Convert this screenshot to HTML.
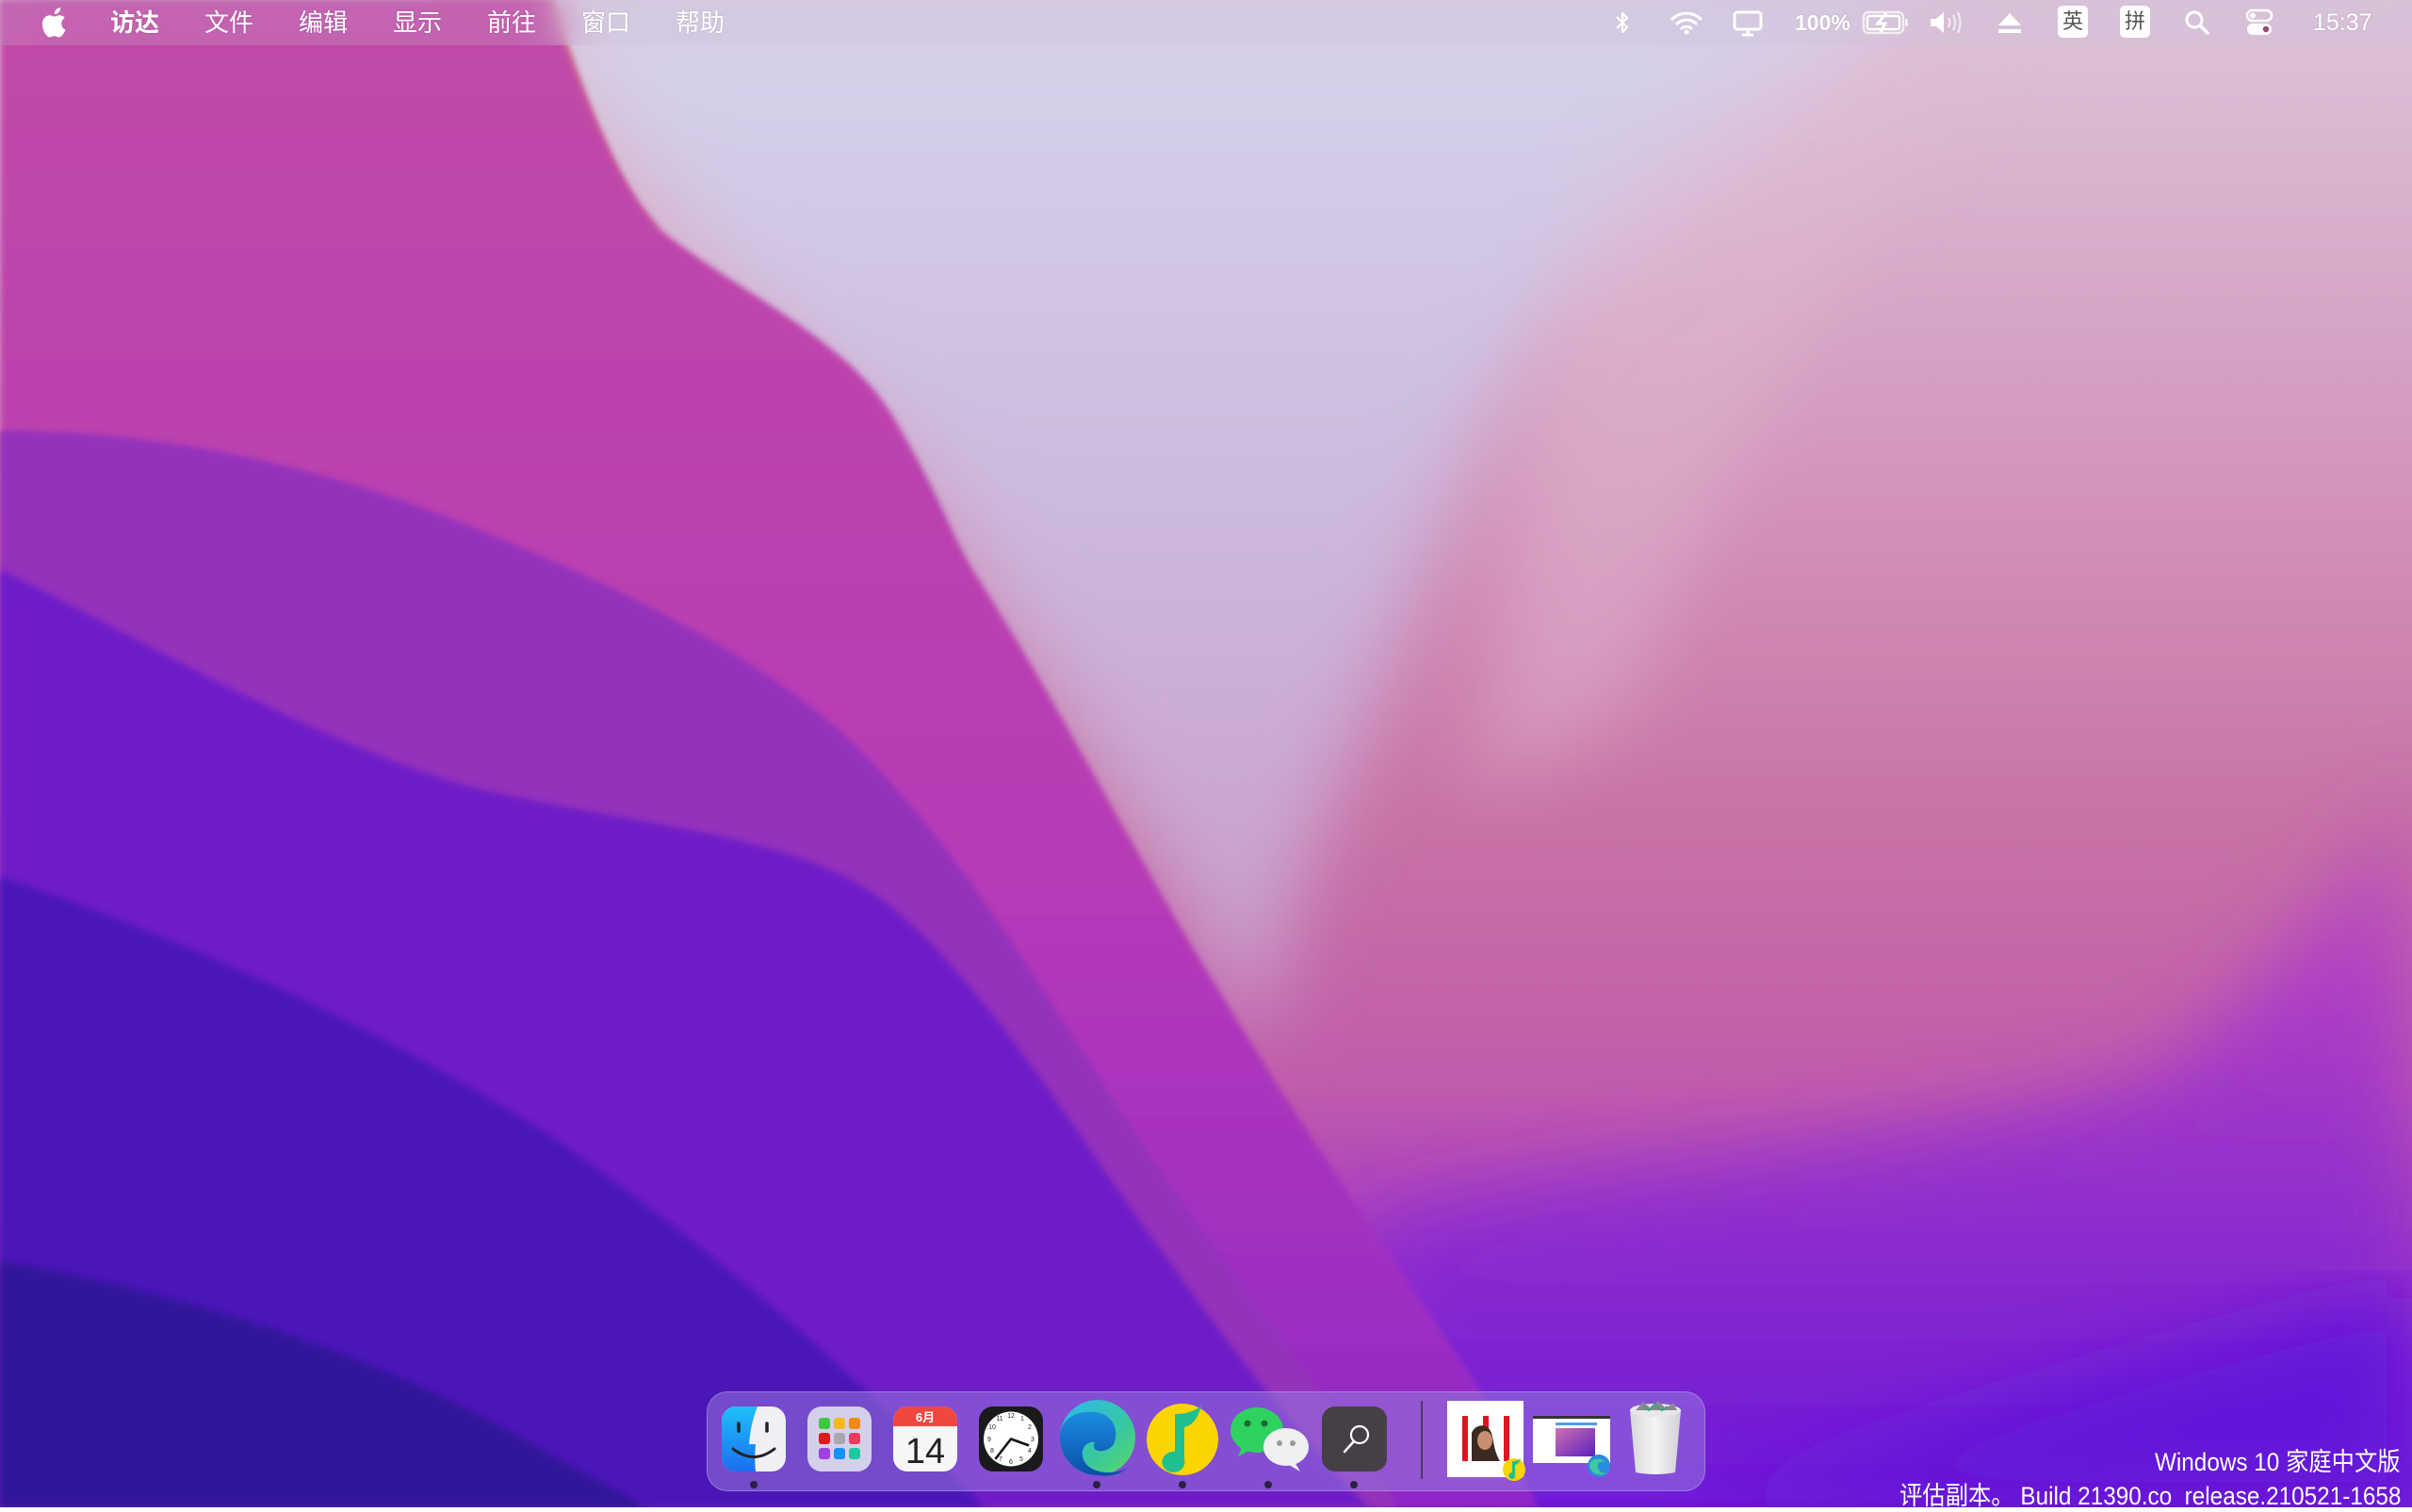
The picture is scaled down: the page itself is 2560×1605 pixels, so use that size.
<!DOCTYPE html>
<html><head><meta charset="utf-8">
<style>
html,body{margin:0;padding:0;width:2560px;height:1600px;overflow:hidden;font-family:"Liberation Sans","Noto Sans CJK SC",sans-serif;}
#bg{position:absolute;left:0;top:0;width:2560px;height:1600px}
.menubar{position:absolute;left:0;top:0;width:2560px;height:48px;background:rgba(200,190,215,0.22);backdrop-filter:blur(20px);color:#fff;}
.mi{position:absolute;top:7px;font-size:26px;line-height:34px;color:#fff;text-shadow:0 0 2px rgba(0,0,0,0.15)}
.ab{position:absolute}
.dock{position:absolute;left:750px;top:1477px;width:1060px;height:106px;border-radius:22px;background:rgba(150,120,220,0.55);border:1px solid rgba(255,255,255,0.25);box-sizing:border-box}
.dot{position:absolute;top:1572px;width:8px;height:8px;border-radius:50%;background:#2a2040}
.wm{position:absolute;right:12px;color:#fff;font-size:27px;text-align:right;white-space:nowrap;transform:scaleX(0.9);transform-origin:right center}
</style></head><body>
<svg id="bg" viewBox="0 0 1568 980" preserveAspectRatio="none">
<defs>
<linearGradient id="base" x1="0" y1="0" x2="0" y2="1">
<stop offset="0" stop-color="#dcc4da"/><stop offset="0.3" stop-color="#d498bc"/><stop offset="0.55" stop-color="#c872a4"/><stop offset="0.72" stop-color="#c05cac"/><stop offset="0.85" stop-color="#a034c8"/><stop offset="1" stop-color="#7018d8"/></linearGradient>
<linearGradient id="sky" x1="0" y1="0" x2="0" y2="1">
<stop offset="0" stop-color="#d6d4ea"/><stop offset="0.5" stop-color="#ccb8dc"/><stop offset="1" stop-color="#c898c8"/></linearGradient>
<linearGradient id="mag" x1="0" y1="0" x2="0" y2="1">
<stop offset="0" stop-color="#c24aa6"/><stop offset="0.6" stop-color="#b63ab8"/><stop offset="1" stop-color="#9028c8"/></linearGradient>
<linearGradient id="rb" x1="0" y1="0" x2="0" y2="1">
<stop offset="0" stop-color="#b848c0" stop-opacity="0"/><stop offset="0.3" stop-color="#b040c4"/><stop offset="1" stop-color="#6a18d8"/></linearGradient>
<filter id="b"><feGaussianBlur stdDeviation="2"/></filter>
<filter id="b2"><feGaussianBlur stdDeviation="25"/></filter>
</defs>
<rect width="1568" height="980" fill="url(#base)"/>
<path d="M350,0 L1230,0 C1180,80 1100,120 1010,200 C950,280 920,380 880,480 C850,560 830,620 820,680 C760,580 700,470 640,380 C600,300 540,240 460,170 C420,120 390,60 350,0 Z" fill="url(#sky)" filter="url(#b2)"/>
<path d="M1040,120 C1100,60 1150,30 1210,30 L1300,30 C1200,150 1120,300 1060,460 L960,520 C980,380 1000,220 1040,120Z" fill="#e2bcd4" opacity="0.45" filter="url(#b2)"/>
<path d="M1568,480 L1568,980 L930,980 L880,800 C1000,760 1200,760 1400,700 C1480,640 1530,560 1568,480 Z" fill="url(#rb)" filter="url(#b2)"/>
<path d="M1568,840 L1568,980 L1100,980 C1250,930 1400,880 1568,840 Z" fill="#6416d8" filter="url(#b2)"/>
<path d="M280,0 L360,0 C380,60 400,120 430,150 L380,130 L320,60 Z" fill="#d07890" filter="url(#b)"/>
<path d="M0,0 L355,0 C380,60 400,120 430,150 C480,190 550,220 580,270 C610,320 615,340 632,370 C690,460 740,560 790,640 C850,740 920,840 960,900 L1000,980 L0,980 Z" fill="url(#mag)" filter="url(#b)"/>
<path d="M0,280 C100,280 200,300 300,340 C400,380 480,420 540,470 C620,540 680,650 740,740 C800,830 860,900 910,980 L0,980 Z" fill="#9430bc" filter="url(#b)"/>
<path d="M0,370 C100,420 200,480 300,510 C420,540 520,540 580,590 C650,650 700,740 760,820 C810,890 850,940 890,980 L0,980 Z" fill="#6e1ec8" filter="url(#b)"/>
<path d="M0,570 C120,610 250,670 360,740 C460,810 540,880 600,940 L640,980 L0,980 Z" fill="#4c16b8" filter="url(#b)"/>
<path d="M0,820 C120,840 240,880 330,930 L420,980 L0,980 Z" fill="#32169a" filter="url(#b)"/>
</svg>

<div class="menubar"></div>
<svg class="ab" style="left:45px;top:8px" width="28" height="32" viewBox="0 0 24 28"><path fill="#fff" d="M16.5,0c0.2,1.7-0.5,3.3-1.5,4.4-1,1.1-2.5,1.9-4,1.8-0.2-1.6,0.6-3.3,1.5-4.3C13.5,0.8,15.2,0.1,16.5,0z M20.5,9.6c-1.9,1.2-3,3.1-3,5.4,0,2.6,1.5,4.8,3.6,5.7-0.4,1.3-1,2.5-1.8,3.6-1.1,1.6-2.3,3.2-4.1,3.2-1.8,0-2.3-1-4.3-1-2,0-2.6,1-4.3,1.1-1.7,0.1-3.1-1.8-4.2-3.3C0.2,21,-1.5,14.7,0.9,10.6c1.2-2,3.3-3.3,5.5-3.4,1.7,0,3.3,1.2,4.3,1.2,1,0,3-1.4,5.1-1.2,0.9,0,3.3,0.4,4.7,2.4z"/></svg>
<div class="mi" style="left:117px;font-weight:bold">访达</div>
<div class="mi" style="left:217px">文件</div>
<div class="mi" style="left:317px">编辑</div>
<div class="mi" style="left:417px">显示</div>
<div class="mi" style="left:517px">前往</div>
<div class="mi" style="left:617px">窗口</div>
<div class="mi" style="left:717px">帮助</div>

<svg class="ab" style="left:1710px;top:10px" width="24" height="28" viewBox="0 0 24 28"><path d="M6,8 L17,19 L12,24 L12,4 L17,9 L6,20" fill="none" stroke="#fff" stroke-width="2.2" stroke-linejoin="round"/></svg>
<svg class="ab" style="left:1772px;top:10px" width="36" height="28" viewBox="0 0 36 28"><path d="M3,10 A22,22 0 0 1 33,10 M8,15 A15,15 0 0 1 28,15 M13,20 A8,8 0 0 1 23,20" fill="none" stroke="#fff" stroke-width="3" stroke-linecap="round"/><circle cx="18" cy="24" r="2.5" fill="#fff"/></svg>
<svg class="ab" style="left:1838px;top:10px" width="34" height="30" viewBox="0 0 34 30"><rect x="3" y="3" width="28" height="18" rx="3" fill="none" stroke="#fff" stroke-width="3"/><path d="M17,21 V27 M11,27 H23" stroke="#fff" stroke-width="3"/></svg>
<div class="mi" style="left:1905px;font-weight:bold;font-size:23px;top:7px">100%</div>
<svg class="ab" style="left:1976px;top:11px" width="52" height="26" viewBox="0 0 52 26"><rect x="2" y="2" width="42" height="22" rx="5" fill="none" stroke="#fff" stroke-opacity="0.7" stroke-width="2.5"/><rect x="46" y="9" width="3" height="8" rx="1" fill="#fff" fill-opacity="0.7"/><rect x="6" y="6" width="34" height="14" rx="2" fill="none" stroke="#fff" stroke-width="2.5"/><path d="M26,3 L17,14 H25 L20,23" fill="none" stroke="#fff" stroke-width="3"/></svg>
<svg class="ab" style="left:2046px;top:10px" width="40" height="28" viewBox="0 0 40 28"><path d="M3,10 H9 L17,3 V25 L9,18 H3 Z" fill="#fff"/><path d="M22,9 Q25,14 22,19 M27,6 Q31,14 27,22 M32,3 Q37,14 32,25" fill="none" stroke="#fff" stroke-opacity="0.7" stroke-width="2"/></svg>
<svg class="ab" style="left:2118px;top:12px" width="30" height="26" viewBox="0 0 30 26"><path d="M15,2 L27,15 H3 Z" fill="#fff"/><rect x="3" y="19" width="24" height="4" fill="#fff"/></svg>
<div class="ab" style="left:2184px;top:6px;width:32px;height:34px;background:#fff;border-radius:5px;color:#555;font-size:22px;line-height:34px;text-align:center">英</div>
<div class="ab" style="left:2250px;top:6px;width:32px;height:34px;background:#fff;border-radius:5px;color:#555;font-size:22px;line-height:34px;text-align:center">拼</div>
<svg class="ab" style="left:2318px;top:10px" width="28" height="28" viewBox="0 0 28 28"><circle cx="11" cy="11" r="8" fill="none" stroke="#fff" stroke-width="3"/><path d="M17,17 L25,25" stroke="#fff" stroke-width="3.5" stroke-linecap="round"/></svg>
<svg class="ab" style="left:2382px;top:8px" width="32" height="32" viewBox="0 0 32 32"><rect x="3" y="3" width="26" height="11" rx="5.5" fill="none" stroke="#fff" stroke-width="2.5"/><circle cx="9" cy="8.5" r="3" fill="#fff"/><rect x="3" y="17" width="26" height="12" rx="6" fill="#fff"/><circle cx="23" cy="23" r="3.2" fill="#8a4a7a"/></svg>
<div class="mi" style="left:2455px;font-size:25px">15:37</div>

<div class="dock"></div>
<svg class="ab" style="left:766px;top:1493px" width="68" height="69" viewBox="0 0 68 69"><defs><linearGradient id="fl" x1="0" y1="0" x2="0" y2="1"><stop offset="0" stop-color="#1ec0f8"/><stop offset="1" stop-color="#1a6ef0"/></linearGradient></defs><rect width="68" height="69" rx="15" fill="#eef0f4"/><path d="M15,0 H38 C32,15 30,28 29,40 H36 C35,50 35,60 36,69 H15 A15,15 0 0 1 0,54 V15 A15,15 0 0 1 15,0 Z" fill="url(#fl)"/><path d="M18,18 V26 M48,18 V26" stroke="#222" stroke-width="3.5" stroke-linecap="round"/><path d="M12,45 Q34,62 56,45" fill="none" stroke="#222" stroke-width="3" stroke-linecap="round"/></svg>
<svg class="ab" style="left:857px;top:1493px" width="68" height="69" viewBox="0 0 68 69"><rect width="68" height="69" rx="15" fill="#d4d0ec"/>
<rect x="12" y="12" width="12" height="12" rx="3" fill="#3ec83e"/><rect x="28" y="12" width="12" height="12" rx="3" fill="#f8b818"/><rect x="44" y="12" width="12" height="12" rx="3" fill="#f08a10"/>
<rect x="12" y="28" width="12" height="12" rx="3" fill="#e01818"/><rect x="28" y="28" width="12" height="12" rx="3" fill="#a8a8b0"/><rect x="44" y="28" width="12" height="12" rx="3" fill="#f03860"/>
<rect x="12" y="44" width="12" height="12" rx="3" fill="#a040e0"/><rect x="28" y="44" width="12" height="12" rx="3" fill="#1890f8"/><rect x="44" y="44" width="12" height="12" rx="3" fill="#20c8a0"/></svg>
<svg class="ab" style="left:948px;top:1493px" width="68" height="69" viewBox="0 0 68 69"><rect width="68" height="69" rx="15" fill="#f6f6f6"/><path d="M15,0 H53 A15,15 0 0 1 68,15 V21 H0 V15 A15,15 0 0 1 15,0 Z" fill="#f0483e"/><text x="34" y="16" font-size="13" font-weight="bold" fill="#fff" text-anchor="middle" font-family="Liberation Sans,Noto Sans CJK SC,sans-serif">6月</text><text x="34" y="60" font-size="38" fill="#222" text-anchor="middle" font-family="Liberation Sans,sans-serif">14</text></svg>
<svg class="ab" style="left:1039px;top:1493px" width="68" height="69" viewBox="0 0 68 69"><rect width="68" height="69" rx="15" fill="#1a1a1a"/><circle cx="34" cy="34.5" r="29" fill="#fff"/>
<g font-size="7" font-family="Liberation Sans,sans-serif" text-anchor="middle" fill="#222"><text x="34" y="12">12</text><text x="46" y="15">1</text><text x="54" y="24">2</text><text x="57" y="37">3</text><text x="54" y="49">4</text><text x="45" y="58">5</text><text x="34" y="61">6</text><text x="23" y="58">7</text><text x="14" y="49">8</text><text x="11" y="37">9</text><text x="14" y="24">10</text><text x="22" y="15">11</text></g>
<path d="M34,34.5 L52,41 M34,34.5 L18,55" stroke="#111" stroke-width="2.6" stroke-linecap="round"/></svg>
<svg class="ab" style="left:1122px;top:1485px" width="86" height="83" viewBox="0 0 86 83"><defs><linearGradient id="eg" x1="0" y1="0" x2="1" y2="1"><stop offset="0" stop-color="#2eb6f0"/><stop offset="0.6" stop-color="#38c8a0"/><stop offset="1" stop-color="#60d860"/></linearGradient><linearGradient id="eb" x1="0" y1="0" x2="0" y2="1"><stop offset="0" stop-color="#1a8ce0"/><stop offset="1" stop-color="#0c4ea8"/></linearGradient></defs>
<circle cx="43" cy="41" r="40" fill="url(#eg)"/><path d="M3,41 C3,20 22,12 40,14 C60,16 66,34 60,48 C54,58 34,58 40,46 C30,44 22,56 30,68 C40,82 70,80 78,70 C70,80 56,83 43,81 C20,81 3,62 3,41 Z" fill="url(#eb)"/></svg>
<svg class="ab" style="left:1213px;top:1487px" width="84" height="80" viewBox="0 0 84 80"><circle cx="42" cy="41" r="38" fill="#fcd400"/><path d="M34,14 L34,54 A12,11 0 1 0 44,62 L44,28 C52,26 58,20 62,5 C54,12 44,14 34,14 Z" fill="#1fbf8f"/></svg>
<svg class="ab" style="left:1304px;top:1492px" width="86" height="70" viewBox="0 0 86 70"><ellipse cx="30" cy="26" rx="28" ry="24" fill="#2ed25e"/><path d="M14,44 L10,54 L24,47Z" fill="#2ed25e"/><circle cx="20" cy="19" r="3.5" fill="#1a6b34"/><circle cx="38" cy="19" r="3.5" fill="#1a6b34"/><ellipse cx="61" cy="44" rx="24" ry="20" fill="#f0f0f2"/><path d="M70,60 L76,70 L64,63Z" fill="#f0f0f2"/><circle cx="54" cy="40" r="3" fill="#999"/><circle cx="68" cy="40" r="3" fill="#999"/></svg>
<svg class="ab" style="left:1403px;top:1493px" width="69" height="69" viewBox="0 0 69 69"><rect width="69" height="69" rx="14" fill="#454045"/><circle cx="40" cy="30" r="9" fill="none" stroke="#fff" stroke-width="2.2"/><path d="M34,37 L24,48" stroke="#fff" stroke-width="2.5" stroke-linecap="round"/></svg>
<div class="dot" style="left:796px"></div>
<div class="dot" style="left:1160px"></div>
<div class="dot" style="left:1251px"></div>
<div class="dot" style="left:1342px"></div>
<div class="dot" style="left:1433px"></div>
<div class="ab" style="left:1508px;top:1487px;width:2px;height:83px;background:#4a3a6a"></div>
<svg class="ab" style="left:1536px;top:1487px" width="90" height="85" viewBox="0 0 90 85"><rect width="81" height="81" fill="#fff"/><rect x="16" y="16" width="6" height="48" fill="#e0141e"/><rect x="38" y="16" width="6" height="48" fill="#e0141e"/><rect x="60" y="16" width="6" height="48" fill="#e0141e"/><path d="M26,64 L26,34 C30,24 42,24 46,32 C50,40 48,50 56,64 Z" fill="#3a2a22"/><ellipse cx="40" cy="42" rx="8" ry="10" fill="#c89070"/><circle cx="71" cy="73" r="12" fill="#fcd400"/><path d="M69,64 V76 A3.5,3.5 0 1 0 72,78 V68 C75,67 77,65 78,61 C75,64 72,64 69,64Z" fill="#1fbf8f"/></svg>
<svg class="ab" style="left:1627px;top:1500px" width="86" height="72" viewBox="0 0 86 72"><rect x="0" y="3" width="82" height="50" fill="#fff"/><rect x="0" y="3" width="82" height="3" fill="#333"/><rect x="24" y="10" width="44" height="3" fill="#4aa0f0"/><defs><linearGradient id="th" x1="0" y1="0" x2="1" y2="1"><stop offset="0" stop-color="#d070b0"/><stop offset="1" stop-color="#5a20c0"/></linearGradient></defs><rect x="24" y="16" width="42" height="30" fill="url(#th)"/><circle cx="70" cy="56" r="12" fill="#2a8ae0"/><path d="M60,56 C60,48 72,46 78,52 C74,50 66,52 70,60 C74,66 80,64 81,60 C78,68 62,68 60,56Z" fill="#3cc8a0"/></svg>
<svg class="ab" style="left:1726px;top:1485px" width="62" height="82" viewBox="0 0 62 82"><defs><linearGradient id="tr" x1="0" y1="0" x2="1" y2="0"><stop offset="0" stop-color="#d8d8dc"/><stop offset="0.5" stop-color="#f4f4f6"/><stop offset="1" stop-color="#d0d0d6"/></linearGradient></defs><path d="M4,12 H58 L52,78 Q31,82 10,78 Z" fill="url(#tr)"/><ellipse cx="31" cy="12" rx="27" ry="7" fill="#e8e8ec"/><path d="M10,12 L18,3 L26,10 L34,2 L42,10 L50,4 L54,12 Z" fill="#8a8a90"/><path d="M18,8 L24,12 L30,6 L38,12 L44,8" fill="none" stroke="#40a080" stroke-width="2"/></svg>

<div class="wm" style="top:1530px">Windows 10 家庭中文版</div>
<div class="wm" style="top:1566px">评估副本。 Build 21390.co_release.210521-1658</div>
</body></html>
